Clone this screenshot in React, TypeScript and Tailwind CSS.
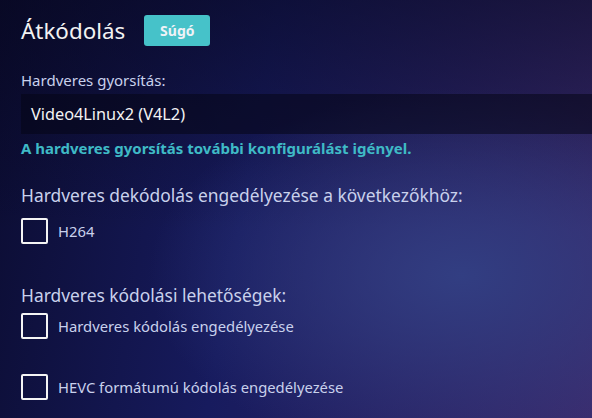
export default function App() {
  return (
    <div
      className="h-[418px] w-[592px] overflow-hidden bg-[radial-gradient(ellipse_at_78%_66%,#323e82_0%,transparent_48%),linear-gradient(to_bottom,rgba(6,6,28,0.55)_0%,transparent_55%),linear-gradient(100deg,#0b0c30_0%,#171b5e_42%,#3b2b6d_100%)] pl-[21px] text-[#c9d1ec]"
      style={{ fontFamily: '"Noto Sans", "Open Sans", sans-serif' }}
    >
      {/* Header */}
      <div className="flex items-center pt-[15px]">
        <h2 className="text-[22.4px] leading-[31px] text-[#f2f2f2]">Átkódolás</h2>
        <button className="ml-[19px] h-[31px] w-[66px] rounded-[3px] bg-[#46c2c9] text-[14px] font-bold text-[#eef2f7]">
          Súgó
        </button>
      </div>

      {/* Hardware acceleration select */}
      <div className="mt-[24px]">
        <label className="block text-[15px] leading-[20px]">Hardveres gyorsítás:</label>
        <div className="mt-[4px] flex h-[40px] w-[600px] items-center bg-[rgba(6,5,22,0.55)] pl-[10px] text-[16.3px] text-[#f3f3f3]">
          Video4Linux2 (V4L2)
        </div>
        <div className="mt-[4px] text-[15px] font-bold leading-[20px] text-[#3fbac6]">
          A hardveres gyorsítás további konfigurálást igényel.
        </div>
      </div>

      {/* Decoding */}
      <h3 className="mt-[25px] text-[17.4px] leading-[24px]">
        Hardveres dekódolás engedélyezése a következőkhöz:
      </h3>
      <Check className="mt-[11px]" label="H264" />

      {/* Encoding */}
      <h3 className="mt-[39px] text-[17.4px] leading-[24px]">Hardveres kódolási lehetőségek:</h3>
      <Check className="mt-[6px]" label="Hardveres kódolás engedélyezése" />
      <Check className="mt-[35px]" label="HEVC formátumú kódolás engedélyezése" />
    </div>
  )
}

function Check({ label, className }: { label: string; className?: string }) {
  return (
    <label className={`flex items-center ${className ?? ''}`}>
      <span className="h-[26px] w-[27px] shrink-0 rounded-[2px] border-2 border-[#f4f4f4]" />
      <span className="ml-[10px] text-[14.8px]">{label}</span>
    </label>
  )
}
